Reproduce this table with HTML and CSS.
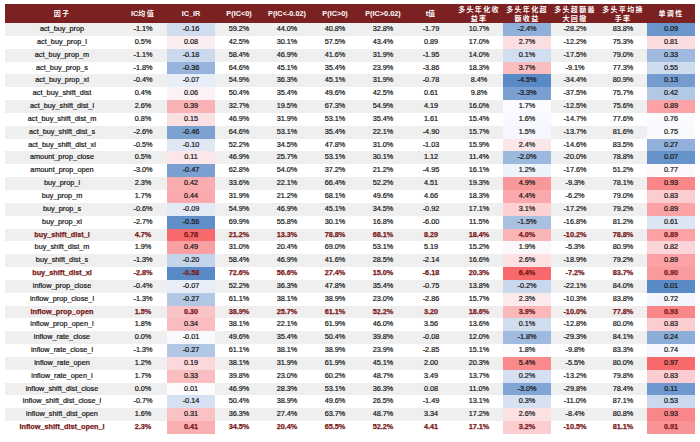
FILE: index.html
```html
<!DOCTYPE html>
<html lang="zh-CN">
<head>
<meta charset="utf-8">
<title>因子测试结果</title>
<link rel="stylesheet" href="styles.css">
</head>
<body>
<table class="factors">
<colgroup><col class="c-name"><col span="12" class="c-num"></colgroup>
<thead>
<tr>
<th><span class="cj">因子</span></th>
<th>IC<span class="cj">均值</span></th>
<th>IC_IR</th>
<th>P(IC&lt;0)</th>
<th>P(IC&lt;-0.02)</th>
<th>P(IC&gt;0)</th>
<th>P(IC&gt;0.02)</th>
<th>t<span class="cj">值</span></th>
<th><span class="cj">多头年化收<br>益率</span></th>
<th><span class="cj">多头年化超<br>额收益</span></th>
<th><span class="cj">多头超额最<br>大回撤</span></th>
<th><span class="cj">多头平均换<br>手率</span></th>
<th><span class="cj">单调性</span></th>
</tr>
</thead>
<tbody>
<tr><td>act_buy_prop</td><td>-1.1%</td><td class="cs">-0.16</td><td>59.2%</td><td>44.0%</td><td>40.8%</td><td>32.8%</td><td>-1.79</td><td>10.7%</td><td class="cs">-2.4%</td><td>-28.2%</td><td>83.8%</td><td class="cs">0.09</td></tr>
<tr><td>act_buy_prop_l</td><td>0.5%</td><td class="cs">0.08</td><td>42.5%</td><td>30.1%</td><td>57.5%</td><td>43.4%</td><td>0.89</td><td>17.0%</td><td class="cs">2.7%</td><td>-12.2%</td><td>75.3%</td><td class="cs">0.81</td></tr>
<tr><td>act_buy_prop_m</td><td>-1.1%</td><td class="cs">-0.18</td><td>58.4%</td><td>46.9%</td><td>41.6%</td><td>31.9%</td><td>-1.95</td><td>14.0%</td><td class="cs">0.1%</td><td>-17.5%</td><td>79.0%</td><td class="cs">0.33</td></tr>
<tr><td>act_buy_prop_s</td><td>-1.8%</td><td class="cs">-0.36</td><td>64.6%</td><td>45.1%</td><td>35.4%</td><td>23.9%</td><td>-3.86</td><td>18.3%</td><td class="cs">3.7%</td><td>-9.1%</td><td>77.3%</td><td class="cs">0.55</td></tr>
<tr><td>act_buy_prop_xl</td><td>-0.4%</td><td class="cs">-0.07</td><td>54.9%</td><td>36.3%</td><td>45.1%</td><td>31.9%</td><td>-0.78</td><td>8.4%</td><td class="cs">-4.5%</td><td>-34.4%</td><td>80.9%</td><td class="cs">0.13</td></tr>
<tr><td>act_buy_shift_dist</td><td>0.4%</td><td class="cs">0.06</td><td>50.4%</td><td>35.4%</td><td>49.6%</td><td>42.5%</td><td>0.61</td><td>9.8%</td><td class="cs">-3.3%</td><td>-37.5%</td><td>75.7%</td><td class="cs">0.42</td></tr>
<tr><td>act_buy_shift_dist_l</td><td>2.6%</td><td class="cs">0.39</td><td>32.7%</td><td>19.5%</td><td>67.3%</td><td>54.9%</td><td>4.19</td><td>16.0%</td><td class="cs">1.7%</td><td>-12.5%</td><td>75.6%</td><td class="cs">0.89</td></tr>
<tr><td>act_buy_shift_dist_m</td><td>0.8%</td><td class="cs">0.15</td><td>46.9%</td><td>31.9%</td><td>53.1%</td><td>35.4%</td><td>1.61</td><td>15.4%</td><td class="cs">1.6%</td><td>-14.7%</td><td>77.6%</td><td class="cs">0.76</td></tr>
<tr><td>act_buy_shift_dist_s</td><td>-2.6%</td><td class="cs">-0.46</td><td>64.6%</td><td>53.1%</td><td>35.4%</td><td>22.1%</td><td>-4.90</td><td>15.7%</td><td class="cs">1.5%</td><td>-13.7%</td><td>81.6%</td><td class="cs">0.75</td></tr>
<tr><td>act_buy_shift_dist_xl</td><td>-0.5%</td><td class="cs">-0.10</td><td>52.2%</td><td>34.5%</td><td>47.8%</td><td>31.0%</td><td>-1.03</td><td>15.9%</td><td class="cs">2.4%</td><td>-14.6%</td><td>83.5%</td><td class="cs">0.27</td></tr>
<tr><td>amount_prop_close</td><td>0.5%</td><td class="cs">0.11</td><td>46.9%</td><td>25.7%</td><td>53.1%</td><td>30.1%</td><td>1.12</td><td>11.4%</td><td class="cs">-2.0%</td><td>-20.0%</td><td>78.8%</td><td class="cs">0.07</td></tr>
<tr><td>amount_prop_open</td><td>-3.0%</td><td class="cs">-0.47</td><td>62.8%</td><td>54.0%</td><td>37.2%</td><td>21.2%</td><td>-4.95</td><td>16.1%</td><td class="cs">1.2%</td><td>-17.6%</td><td>51.2%</td><td class="cs">0.77</td></tr>
<tr><td>buy_prop_l</td><td>2.3%</td><td class="cs">0.42</td><td>33.6%</td><td>22.1%</td><td>66.4%</td><td>52.2%</td><td>4.51</td><td>19.3%</td><td class="cs">4.9%</td><td>-9.3%</td><td>78.1%</td><td class="cs">0.93</td></tr>
<tr><td>buy_prop_m</td><td>1.7%</td><td class="cs">0.44</td><td>31.9%</td><td>21.2%</td><td>68.1%</td><td>49.6%</td><td>4.66</td><td>18.3%</td><td class="cs">4.4%</td><td>-6.2%</td><td>79.0%</td><td class="cs">0.83</td></tr>
<tr><td>buy_prop_s</td><td>-0.6%</td><td class="cs">-0.09</td><td>54.9%</td><td>46.9%</td><td>45.1%</td><td>34.5%</td><td>-0.92</td><td>17.1%</td><td class="cs">3.1%</td><td>-17.2%</td><td>79.2%</td><td class="cs">0.89</td></tr>
<tr><td>buy_prop_xl</td><td>-2.7%</td><td class="cs">-0.56</td><td>69.9%</td><td>55.8%</td><td>30.1%</td><td>16.8%</td><td>-6.00</td><td>11.5%</td><td class="cs">-1.5%</td><td>-16.8%</td><td>81.2%</td><td class="cs">0.61</td></tr>
<tr class="hl"><td>buy_shift_dist_l</td><td>4.7%</td><td class="cs">0.78</td><td>21.2%</td><td>13.3%</td><td>78.8%</td><td>68.1%</td><td>8.29</td><td>18.4%</td><td class="cs">4.0%</td><td>-10.2%</td><td>78.8%</td><td class="cs">0.89</td></tr>
<tr><td>buy_shift_dist_m</td><td>1.9%</td><td class="cs">0.49</td><td>31.0%</td><td>20.4%</td><td>69.0%</td><td>53.1%</td><td>5.19</td><td>15.2%</td><td class="cs">1.9%</td><td>-5.3%</td><td>80.9%</td><td class="cs">0.82</td></tr>
<tr><td>buy_shift_dist_s</td><td>-1.3%</td><td class="cs">-0.20</td><td>58.4%</td><td>46.9%</td><td>41.6%</td><td>28.5%</td><td>-2.14</td><td>16.6%</td><td class="cs">2.6%</td><td>-18.9%</td><td>79.2%</td><td class="cs">0.89</td></tr>
<tr class="hl"><td>buy_shift_dist_xl</td><td>-2.8%</td><td class="cs">-0.58</td><td>72.6%</td><td>56.6%</td><td>27.4%</td><td>15.0%</td><td>-6.18</td><td>20.3%</td><td class="cs">6.4%</td><td>-7.2%</td><td>83.7%</td><td class="cs">0.90</td></tr>
<tr><td>inflow_prop_close</td><td>-0.4%</td><td class="cs">-0.07</td><td>52.2%</td><td>36.3%</td><td>47.8%</td><td>35.4%</td><td>-0.75</td><td>13.8%</td><td class="cs">-0.2%</td><td>-22.1%</td><td>84.0%</td><td class="cs">0.01</td></tr>
<tr><td>inflow_prop_close_l</td><td>-1.3%</td><td class="cs">-0.27</td><td>61.1%</td><td>38.1%</td><td>38.9%</td><td>23.0%</td><td>-2.86</td><td>15.7%</td><td class="cs">2.3%</td><td>-10.3%</td><td>83.8%</td><td class="cs">0.72</td></tr>
<tr class="hl"><td>inflow_prop_open</td><td>1.5%</td><td class="cs">0.30</td><td>38.9%</td><td>25.7%</td><td>61.1%</td><td>52.2%</td><td>3.20</td><td>18.6%</td><td class="cs">3.9%</td><td>-10.0%</td><td>77.8%</td><td class="cs">0.93</td></tr>
<tr><td>inflow_prop_open_l</td><td>1.8%</td><td class="cs">0.34</td><td>38.1%</td><td>22.1%</td><td>61.9%</td><td>46.0%</td><td>3.56</td><td>13.6%</td><td class="cs">0.1%</td><td>-12.8%</td><td>80.0%</td><td class="cs">0.83</td></tr>
<tr><td>inflow_rate_close</td><td>0.0%</td><td class="cs">-0.01</td><td>49.6%</td><td>35.4%</td><td>50.4%</td><td>39.8%</td><td>-0.08</td><td>12.0%</td><td class="cs">-1.8%</td><td>-29.3%</td><td>84.1%</td><td class="cs">0.24</td></tr>
<tr><td>inflow_rate_close_l</td><td>-1.3%</td><td class="cs">-0.27</td><td>61.1%</td><td>38.1%</td><td>38.9%</td><td>23.9%</td><td>-2.85</td><td>15.1%</td><td class="cs">1.8%</td><td>-9.8%</td><td>83.3%</td><td class="cs">0.74</td></tr>
<tr><td>inflow_rate_open</td><td>1.2%</td><td class="cs">0.19</td><td>38.1%</td><td>31.9%</td><td>61.9%</td><td>45.1%</td><td>2.00</td><td>20.3%</td><td class="cs">5.4%</td><td>-5.5%</td><td>80.0%</td><td class="cs">0.97</td></tr>
<tr><td>inflow_rate_open_l</td><td>1.7%</td><td class="cs">0.33</td><td>39.8%</td><td>23.0%</td><td>60.2%</td><td>48.7%</td><td>3.49</td><td>13.7%</td><td class="cs">0.2%</td><td>-13.2%</td><td>79.8%</td><td class="cs">0.83</td></tr>
<tr><td>inflow_shift_dist_close</td><td>0.0%</td><td class="cs">0.01</td><td>46.9%</td><td>28.3%</td><td>53.1%</td><td>36.3%</td><td>0.08</td><td>11.0%</td><td class="cs">-3.0%</td><td>-29.8%</td><td>78.4%</td><td class="cs">0.11</td></tr>
<tr><td>inflow_shift_dist_close_l</td><td>-0.7%</td><td class="cs">-0.14</td><td>50.4%</td><td>38.9%</td><td>49.6%</td><td>26.5%</td><td>-1.49</td><td>13.1%</td><td class="cs">0.3%</td><td>-11.0%</td><td>87.1%</td><td class="cs">0.53</td></tr>
<tr><td>inflow_shift_dist_open</td><td>1.6%</td><td class="cs">0.31</td><td>36.3%</td><td>27.4%</td><td>63.7%</td><td>48.7%</td><td>3.34</td><td>17.2%</td><td class="cs">2.6%</td><td>-8.4%</td><td>80.8%</td><td class="cs">0.93</td></tr>
<tr class="hl"><td>inflow_shift_dist_open_l</td><td>2.3%</td><td class="cs">0.41</td><td>34.5%</td><td>20.4%</td><td>65.5%</td><td>52.2%</td><td>4.41</td><td>17.1%</td><td class="cs">3.2%</td><td>-10.5%</td><td>81.1%</td><td class="cs">0.91</td></tr>
</tbody>
</table>
<script src="script.js"></script>
</body>
</html>
```

FILE: styles.css
```css
html, body {
  margin: 0;
  padding: 0;
  background: #ffffff;
}

body {
  padding: 4px 5px 0 5px;
  font-family: "Liberation Sans", Arial, "Noto Sans CJK SC", sans-serif;
}

.factors {
  width: 690px;
  border-collapse: collapse;
  table-layout: fixed;
  color: #141414;
}

.c-name { width: 114px; }
.c-num { width: 48px; }

.factors th {
  height: 19px;
  padding: 0;
  background: #7c2121;
  color: #ffffff;
  font-weight: bold;
  font-size: 7.3px;
  line-height: 8px;
  text-align: center;
  vertical-align: middle;
  white-space: nowrap;
}

.cj {
  font-family: "Noto Sans CJK SC", "Liberation Sans", sans-serif;
  font-size: 7px;
  letter-spacing: 1.3px;
  font-weight: bold;
}

.factors td {
  height: 12.84px;
  padding: 0;
  font-size: 7.3px;
  line-height: 12.84px;
  text-align: center;
  white-space: nowrap;
  overflow: hidden;
  -webkit-text-stroke: 0.2px #141414;
}

.factors tbody tr:nth-child(odd) {
  background: #efefef;
}

.factors tbody tr.hl td {
  color: #7a1a1a;
  font-weight: bold;
  -webkit-text-stroke: 0.25px #7a1a1a;
}
```

FILE: script.js
```js
(function () {
  var MIN = [90, 138, 198];
  var MID = [252, 252, 255];
  var MAX = [248, 105, 107];

  function mix(a, b, t) {
    return a.map(function (v, i) { return Math.round(v + (b[i] - v) * t); });
  }

  var table = document.querySelector('.factors');
  var groups = {};
  table.querySelectorAll('td.cs').forEach(function (td) {
    var k = td.cellIndex;
    (groups[k] = groups[k] || []).push(td);
  });

  Object.keys(groups).forEach(function (k) {
    var cells = groups[k];
    var vals = cells.map(function (td) { return parseFloat(td.textContent); });
    var sorted = vals.slice().sort(function (a, b) { return a - b; });
    var n = sorted.length;
    var pos = (n - 1) * 0.5;
    var lo = Math.floor(pos), hi = Math.ceil(pos);
    var mid = sorted[lo] + (sorted[hi] - sorted[lo]) * (pos - lo);
    var min = sorted[0], max = sorted[n - 1];
    cells.forEach(function (td, i) {
      var v = vals[i], c;
      if (v <= mid) {
        c = mix(MIN, MID, (v - min) / (mid - min));
      } else {
        c = mix(MID, MAX, (v - mid) / (max - mid));
      }
      td.style.backgroundColor = 'rgb(' + c.join(',') + ')';
    });
  });
})();
```
